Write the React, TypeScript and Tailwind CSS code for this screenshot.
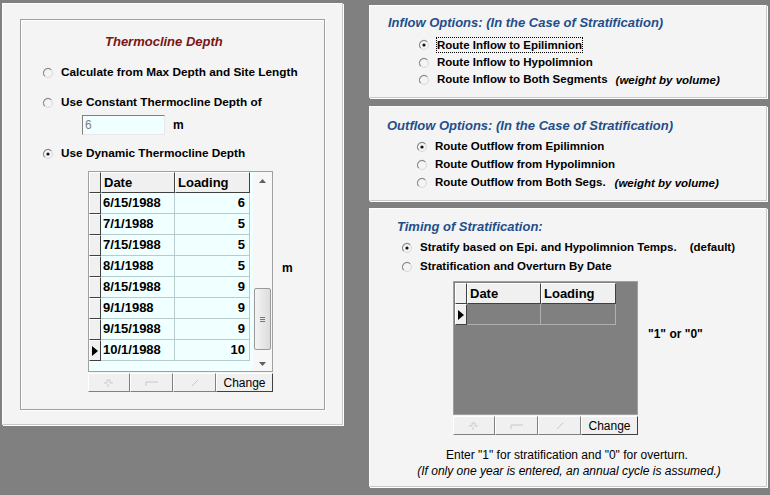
import React from 'react';

function Radio({ checked }: { checked?: boolean }) {
  return (
    <svg width="12" height="12" viewBox="0 0 12 12" className="shrink-0">
      <circle cx="6" cy="6" r="4.5" fill="none" stroke="#d8d8d8" strokeWidth="1" />
      <path d="M2.8 9.2 A4.5 4.5 0 0 1 9.2 2.8" fill="none" stroke="#8a8a8a" strokeWidth="1.2" />
      {checked && <circle cx="6" cy="6" r="1.6" fill="#111" />}
    </svg>
  );
}

function Option({ checked, children, extra }: { checked?: boolean; children: React.ReactNode; extra?: React.ReactNode }) {
  return (
    <div className="flex items-center gap-[7px] h-[16px]">
      <Radio checked={checked} />
      {children}
      {extra}
    </div>
  );
}

function NavButtons() {
  return (
    <div className="flex h-[19px] mt-[1px] text-[12px] font-normal text-black">
      <button className="w-[42px] h-full bg-[#f0f0f0] border border-t-white border-l-white border-r-[#808080] border-b-[#808080] flex items-center justify-center">
        <svg width="12" height="10" viewBox="0 0 12 10">
          <path d="M1 5h3V2h3v3h3M5 6v3" fill="none" stroke="#c8c8c8" strokeWidth="1" />
        </svg>
      </button>
      <button className="w-[43px] h-full bg-[#f0f0f0] border border-t-white border-l-white border-r-[#808080] border-b-[#808080] flex items-center justify-center">
        <svg width="14" height="8" viewBox="0 0 14 8">
          <path d="M1 3h12M1 3v4" fill="none" stroke="#c8c8c8" strokeWidth="1" />
        </svg>
      </button>
      <button className="w-[43px] h-full bg-[#f0f0f0] border border-t-white border-l-white border-r-[#808080] border-b-[#808080] flex items-center justify-center">
        <svg width="10" height="10" viewBox="0 0 10 10">
          <path d="M2 8L8 2" fill="none" stroke="#c8c8c8" strokeWidth="1" />
        </svg>
      </button>
      <button className="w-[57px] h-full bg-[#f0f0f0] border border-t-white border-l-white border-r-[#404040] border-b-[#404040] flex items-center justify-center">
        Change
      </button>
    </div>
  );
}

const rows = [
  ['6/15/1988', '6'],
  ['7/1/1988', '5'],
  ['7/15/1988', '5'],
  ['8/1/1988', '5'],
  ['8/15/1988', '9'],
  ['9/1/1988', '9'],
  ['9/15/1988', '9'],
  ['10/1/1988', '10'],
];

function Indicator({ active }: { active?: boolean }) {
  return (
    <div className="w-[12px] h-full bg-[#f0f0f0] border-t border-l border-t-white border-l-white border-r border-b border-r-[#404040] border-b-[#404040] flex items-center justify-center">
      {active && (
        <svg width="6" height="10" viewBox="0 0 6 10">
          <path d="M0 0L6 5L0 10Z" fill="#000" />
        </svg>
      )}
    </div>
  );
}

function HeaderRow() {
  return (
    <div className="flex h-[21px] text-[13px] font-bold">
      <div className="w-[12px] h-full bg-[#f0f0f0] border border-t-white border-l-white border-r-[#404040] border-b-[#404040]" />
      <div className="w-[74px] h-full bg-[#f0f0f0] border border-t-white border-l-white border-r-[#404040] border-b-[#404040] pl-[2px] leading-[19px]">Date</div>
      <div className="w-[75px] h-full bg-[#f0f0f0] border border-t-white border-l-white border-r-[#404040] border-b-[#404040] pl-[2px] leading-[19px]">Loading</div>
    </div>
  );
}

function DepthGrid() {
  return (
    <div className="ml-[67px] w-[185px]">
      <div className="flex h-[201px] border border-[#a0a0a0] bg-[#f0ffff]">
        <div className="w-[164px] flex flex-col">
          <HeaderRow />
          {rows.map(([d, v], i) => (
            <div key={d} className="flex h-[21px] text-[13px] font-bold">
              <Indicator active={i === rows.length - 1} />
              <div className="w-[74px] h-full border-r border-b border-[#b8cccc] pl-[2px] leading-[20px]">{d}</div>
              <div className="w-[75px] h-full border-r border-b border-[#b8cccc] pr-[4px] text-right leading-[20px]">{v}</div>
            </div>
          ))}
        </div>
        <div className="ml-auto w-[19px] h-full bg-[#f7f7f7] flex flex-col items-center">
          <div className="h-[17px] flex items-center justify-center">
            <svg width="7" height="4" viewBox="0 0 7 4"><path d="M0 4L3.5 0L7 4Z" fill="#606060" /></svg>
          </div>
          <div className="flex-1 w-full flex flex-col justify-end">
            <div className="h-[62px] mx-[1px] mb-[6px] bg-gradient-to-r from-[#f4f4f4] to-[#dcdcdc] border border-[#9a9a9a] rounded-[2px] flex flex-col items-center justify-center gap-[1px]">
              <div className="w-[5px] h-[1px] bg-[#777]" />
              <div className="w-[5px] h-[1px] bg-[#777]" />
              <div className="w-[5px] h-[1px] bg-[#777]" />
            </div>
          </div>
          <div className="h-[15px] flex items-center justify-center">
            <svg width="7" height="4" viewBox="0 0 7 4"><path d="M0 0L3.5 4L7 0Z" fill="#606060" /></svg>
          </div>
        </div>
      </div>
      <NavButtons />
    </div>
  );
}

function StratGrid() {
  return (
    <div className="w-[185px]">
      <div className="h-[134px] border border-[#a0a0a0] bg-[#808080] pl-[1px] pt-[1px]">
        <HeaderRow />
        <div className="flex h-[21px]">
          <Indicator active />
          <div className="w-[74px] h-full border-r border-b border-[#b0b0b0]" />
          <div className="w-[75px] h-full border-r border-b border-[#b0b0b0]" />
        </div>
      </div>
      <NavButtons />
    </div>
  );
}

const panel = 'bg-[#f4f4f4] border border-t-[#fdfdfd] border-l-[#fdfdfd] border-r-[#c8c8c8] border-b-[#c8c8c8] shadow-[1px_1px_0_#ffffff]';

export default function App() {
  return (
    <div className="w-[770px] h-[495px] bg-[#808080] flex pl-[2px] pt-[3px] font-['Liberation_Sans',Arial,sans-serif] text-black overflow-hidden">
      {/* Left panel */}
      <div className={`w-[341px] h-[422px] ${panel} px-[17px] pt-[15px]`}>
        <div className="h-[391px] border border-[#a0a0a0] shadow-[1px_1px_0_#fff,inset_1px_1px_0_#fff] flex flex-col text-[11.8px] font-bold">
          <div className="mt-[14px] pl-[84px] h-[16px] text-[13px] italic text-[#7a1515] leading-[16px]">Thermocline Depth</div>
          <div className="mt-[15px] pl-[21px]">
            <Option>Calculate from Max Depth and Site Length</Option>
          </div>
          <div className="mt-[14px] pl-[21px]">
            <Option>Use Constant Thermocline Depth of</Option>
          </div>
          <div className="mt-[4px] pl-[61px] flex items-center h-[20px]">
            <div className="w-[83px] h-[20px] bg-[#f0ffff] border border-t-[#808080] border-l-[#808080] border-r-[#e8e8e8] border-b-[#e8e8e8] font-normal text-[12px] text-[#808080] pl-[2px] leading-[18px]">6</div>
            <span className="ml-[8px] text-[12px]">m</span>
          </div>
          <div className="mt-[11px] pl-[21px]">
            <Option checked>Use Dynamic Thermocline Depth</Option>
          </div>
          <div className="mt-[9px] flex">
            <DepthGrid />
            <div className="ml-[9px] mt-[88px] text-[12px]">m</div>
          </div>
        </div>
      </div>

      {/* Right column */}
      <div className="ml-[26px] mt-[2px] w-[398px] flex flex-col text-[11.5px] font-bold">
        <div className={`h-[93px] ${panel} pl-[18px] pt-[9px]`}>
          <div className="text-[13px] italic text-[#1f4e8c] h-[16px] leading-[16px]">Inflow Options: (In the Case of Stratification)</div>
          <div className="mt-[6px] pl-[30px] flex flex-col gap-[1.5px]">
            <Option checked>
              <span className="outline outline-1 outline-dotted outline-black leading-[14px]">Route Inflow to Epilimnion</span>
            </Option>
            <Option>Route Inflow to Hypolimnion</Option>
            <Option extra={<span className="ml-[1px] mt-[2px] italic">(weight by volume)</span>}>Route Inflow to Both Segments</Option>
          </div>
        </div>

        <div className={`mt-[8px] h-[95px] ${panel} pl-[17px] pt-[11px]`}>
          <div className="text-[13px] italic text-[#1f4e8c] h-[16px] leading-[16px]">Outflow Options: (In the Case of Stratification)</div>
          <div className="mt-[5px] pl-[29px] flex flex-col gap-[2px]">
            <Option checked>Route Outflow from Epilimnion</Option>
            <Option>Route Outflow from Hypolimnion</Option>
            <Option extra={<span className="ml-[2px] mt-[2px] italic">(weight by volume)</span>}>Route Outflow from Both Segs.</Option>
          </div>
        </div>

        <div className={`mt-[7px] h-[279px] ${panel} pt-[10px]`}>
          <div className="pl-[27px] text-[13px] italic text-[#1f4e8c] h-[16px] leading-[16px]">Timing of Stratification:</div>
          <div className="mt-[5px] pl-[31px] flex flex-col gap-[3px]">
            <Option checked>
              <span>Stratify based on Epi. and Hypolimnion Temps.</span>
              <span className="ml-[6px]">(default)</span>
            </Option>
            <Option>Stratification and Overturn By Date</Option>
          </div>
          <div className="mt-[6px] pl-[83px] flex">
            <StratGrid />
            <div className="ml-[10px] mt-[44px] text-[12px]">"1" or "0"</div>
          </div>
          <div className="mt-[12px] text-center font-normal text-[12px] leading-[16px]">
            <div className="pr-[2px]">Enter "1" for stratification and "0" for overturn.</div>
            <div className="italic pl-[2px]">(If only one year is entered, an annual cycle is assumed.)</div>
          </div>
        </div>
      </div>
    </div>
  );
}
